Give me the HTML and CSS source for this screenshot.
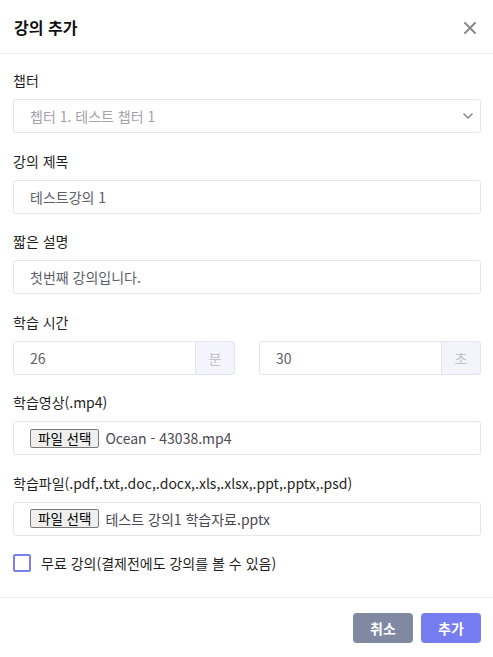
FILE: index.html
```html
<!DOCTYPE html>
<html lang="ko">
<head>
<meta charset="UTF-8">
<meta name="viewport" content="width=device-width, initial-scale=1.0">
<title>강의 추가</title>
<link rel="stylesheet" href="styles.css">
</head>
<body>

<div class="modal">
    <div class="modal-header">
        <h5>강의 추가</h5>
        <button class="close" type="button" aria-label="닫기">
            <svg width="12" height="12" viewBox="0 0 12 12"><path d="M1 1L11 11M11 1L1 11" stroke="#8a8a8a" stroke-width="2" stroke-linecap="round"/></svg>
        </button>
    </div>

    <div class="modal-body">
        <div class="group">
            <label>챕터</label>
            <div class="field select">
                <span class="muted">쳅터 1. 테스트 챕터 1</span>
                <svg width="12" height="8" viewBox="0 0 12 8"><path d="M2 2L6 6L10 2" fill="none" stroke="#8a8a8a" stroke-width="1.6" stroke-linecap="round" stroke-linejoin="round"/></svg>
            </div>
        </div>
        <div class="group">
            <label>강의 제목</label>
            <div class="field">테스트강의 1</div>
        </div>
        <div class="group">
            <label>짧은 설명</label>
            <div class="field">첫번째 강의입니다.</div>
        </div>
        <div class="group">
            <label>학습 시간</label>
            <div class="time-row">
                <div class="input-group">
                    <div class="field">26</div>
                    <span class="addon">분</span>
                </div>
                <div class="input-group">
                    <div class="field">30</div>
                    <span class="addon">초</span>
                </div>
            </div>
        </div>
        <div class="group">
            <label>학습영상(.mp4)</label>
            <div class="field file">
                <span class="file-btn">파일 선택</span>
                <span>Ocean - 43038.mp4</span>
            </div>
        </div>
        <div class="group">
            <label>학습파일(.pdf,.txt,.doc,.docx,.xls,.xlsx,.ppt,.pptx,.psd)</label>
            <div class="field file">
                <span class="file-btn">파일 선택</span>
                <span>테스트 강의1 학습자료.pptx</span>
            </div>
        </div>
        <div class="check">
            <span class="box"></span>
            <span>무료 강의(결제전에도 강의를 볼 수 있음)</span>
        </div>
    </div>

    <div class="modal-footer">
        <button class="btn btn-secondary" type="button">취소</button>
        <button class="btn btn-primary" type="button">추가</button>
    </div>
</div>

</body>
</html>
```

FILE: styles.css
```css
body {
    margin: 0;
    padding: 0;
    background: #fff;
    font-family: "Noto Sans CJK KR", "Noto Sans", sans-serif;
    color: #1f1f24;
}
.modal {
    width: 493px;
}
.modal-header {
    height: 54px;
    box-sizing: border-box;
    padding: 0 13px 0 14px;
    display: flex;
    align-items: center;
    justify-content: space-between;
    border-bottom: 1px solid #ebe9f1;
}
.modal-header h5 {
    margin: 0;
    font-size: 16px;
    line-height: 22px;
    font-weight: 700;
    color: #111;
}
.close {
    border: 0;
    background: none;
    padding: 0 4px 0 0;
    display: flex;
    margin-top: 2px;
}
.modal-body {
    padding: 16px 12px 25px 13px;
}
.group {
    margin-bottom: 17.6px;
}
.group label {
    display: block;
    font-size: 14px;
    line-height: 20px;
    margin-bottom: 9px;
    color: #1f1f24;
}
.field {
    height: 34px;
    box-sizing: border-box;
    border: 1px solid #e6e5ef;
    border-radius: 3px;
    padding: 0 16px;
    display: flex;
    align-items: center;
    font-size: 14px;
    line-height: 20px;
    color: #5e5d68;
}
.select {
    justify-content: space-between;
    padding-right: 6px;
}
.muted {
    color: #a3a2aa;
}
.time-row {
    display: flex;
    gap: 24px;
}
.input-group {
    flex: 1;
    display: flex;
}
.input-group .field {
    flex: 1;
    border-radius: 3px 0 0 3px;
}
.addon {
    width: 39px;
    box-sizing: border-box;
    display: flex;
    align-items: center;
    justify-content: center;
    background: #f4f4fd;
    border: 1px solid #e6e5ef;
    border-left: 0;
    border-radius: 0 3px 3px 0;
    font-size: 14px;
    color: #c2c1ca;
}
.file {
    gap: 6px;
    color: #4a4955;
}
.file-btn {
    height: 19px;
    box-sizing: border-box;
    padding: 0 7px;
    border: 1px solid #7a7a7a;
    border-radius: 2px;
    background: #efefef;
    font-size: 13.5px;
    line-height: 17px;
    color: #000;
}
.check {
    display: flex;
    align-items: center;
    gap: 10px;
    font-size: 14px;
    line-height: 18px;
    color: #1f1f24;
}
.box {
    width: 18px;
    height: 18px;
    box-sizing: border-box;
    border: 2px solid #7b80f2;
    border-radius: 2px;
}
.modal-footer {
    border-top: 1px solid #ebe9f1;
    padding: 15px 12px 14px;
    display: flex;
    justify-content: flex-end;
    gap: 8px;
}
.btn {
    width: 60px;
    height: 30px;
    border: 0;
    border-radius: 4px;
    font-family: inherit;
    font-size: 14px;
    font-weight: 700;
    color: #fff;
}
.btn-secondary {
    background: #7f89a2;
}
.btn-primary {
    background: #767cf2;
}
```
